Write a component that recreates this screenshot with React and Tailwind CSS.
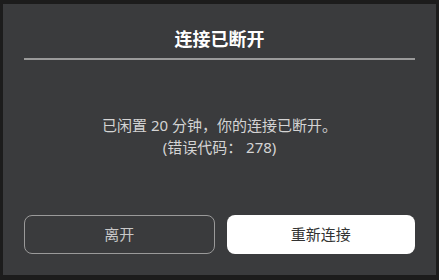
import React from "react";

const font = { fontFamily: '"Noto Sans", "Noto Sans CJK SC", sans-serif' };

export default function App() {
  return (
    <div className="w-[439px] h-[280px] bg-[#1c1c1c] pt-[4px] pl-[3px]" style={font}>
      <div className="w-[433px] h-[271px] bg-[#3a3b3d] flex flex-col px-[21px]">
        <div className="h-[54px] flex items-end justify-center pb-[10px]">
          <h1 className="text-white text-[18px] font-bold leading-none">连接已断开</h1>
        </div>
        <div className="h-[2px] bg-[#9a9a9a]" />
        <div className="flex-1 flex flex-col items-center justify-center text-[#d4d4d4] text-[15px] leading-[22px] pb-[4px]">
          <p>已闲置 20 分钟，你的连接已断开。</p>
          <p>(错误代码： 278)</p>
        </div>
        <div className="flex gap-[12px] pb-[21px]">
          <button className="flex-1 h-[39px] rounded-[8px] border border-[#9a9a9a] text-[#c8c8c8] text-[15px]">
            离开
          </button>
          <button className="flex-1 h-[39px] rounded-[8px] bg-white text-[#333] text-[15px]">
            重新连接
          </button>
        </div>
      </div>
    </div>
  );
}
